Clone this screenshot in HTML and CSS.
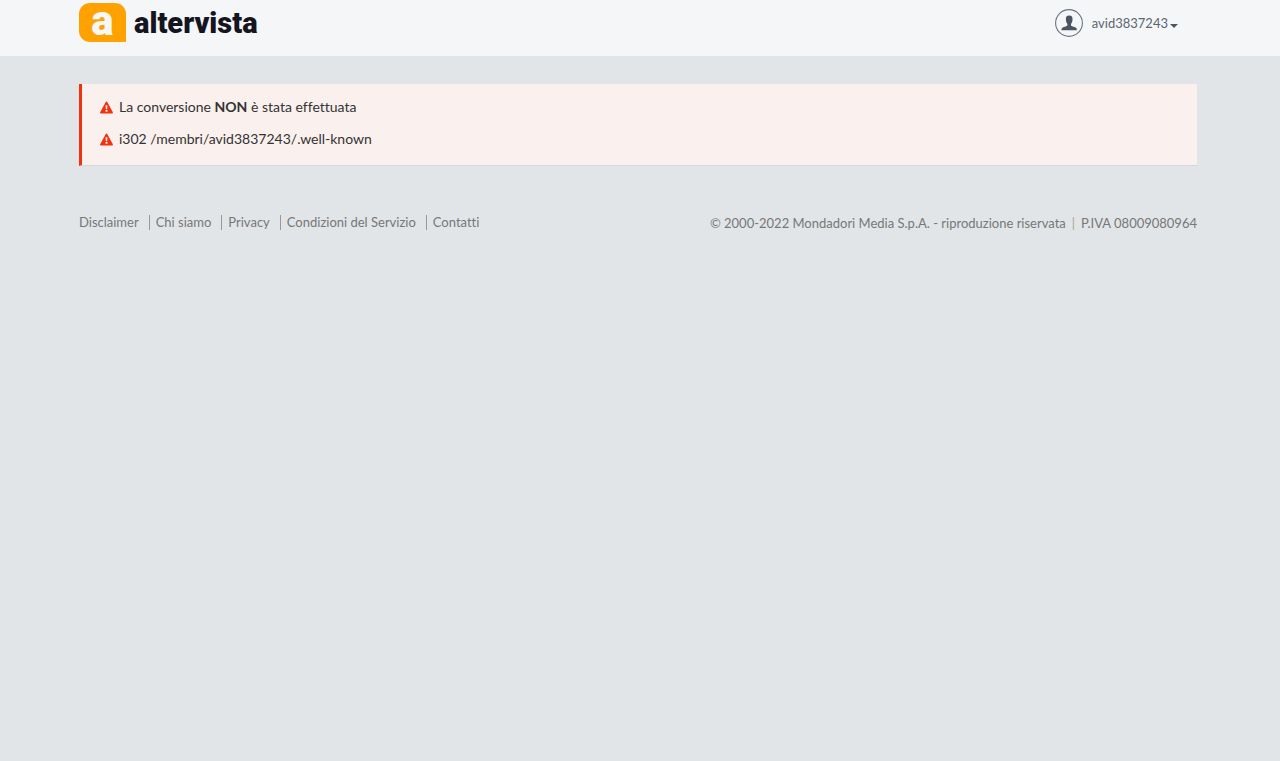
FILE: index.html
```html
<!DOCTYPE html>
<html lang="it">
<head>
<meta charset="utf-8">
<meta name="viewport" content="width=device-width, initial-scale=1">
<title>Altervista</title>
<link rel="stylesheet" href="styles.css">
</head>
<body>
<header class="topbar">
  <div class="container topbar-inner">
    <a class="brand" href="#">
      <span class="brand-mark" aria-hidden="true">a</span>
      <span class="brand-name">altervista</span>
    </a>
    <button class="user" type="button">
      <svg class="avatar" viewBox="0 0 28 28" aria-hidden="true">
        <circle cx="14" cy="14" r="13.4" fill="none" stroke="#6b7480" stroke-width="1.1"/>
        <path fill="#4b5661" d="M14.200 6.500C11.600 6.500 10.700 8 10.900 10.300C10.900 12.600 11.500 14 12.400 15C12.600 16.500 12.200 17 10.700 17.500C8 18.300 6.500 18.500 6.500 21.200H21.900C21.900 18.500 20.400 18.300 17.700 17.500C16.200 17 15.800 16.500 16 15C16.900 14 17.500 12.600 17.500 10.300C17.700 8 16.800 6.500 14.200 6.500Z"/>
      </svg>
      <span>avid3837243</span>
      <svg class="caret" viewBox="0 0 8 4" aria-hidden="true"><path fill="#4b5661" d="M0 0H8L4 4Z"/></svg>
    </button>
  </div>
</header>
<main class="container">
  <div class="alert" role="alert">
    <p class="alert-line">
      <svg class="warn" viewBox="0 0 14 13" aria-hidden="true"><path fill="#f0330f" d="M6.200.6Q7-.5 7.800.6L13.700 11.400Q14.200 12.800 13 13H1Q-.2 12.800.3 11.400Z"/><path fill="#faf0ee" d="M6 4.200H8L7.700 8.400H6.300ZM6 9.300H8V11.100H6Z"/></svg>
      <span>La conversione <strong>NON</strong> è stata effettuata</span>
    </p>
    <p class="alert-line">
      <svg class="warn" viewBox="0 0 14 13" aria-hidden="true"><path fill="#f0330f" d="M6.200.6Q7-.5 7.800.6L13.700 11.400Q14.200 12.800 13 13H1Q-.2 12.800.3 11.400Z"/><path fill="#faf0ee" d="M6 4.200H8L7.700 8.400H6.300ZM6 9.300H8V11.100H6Z"/></svg>
      <span>i302 /membri/avid3837243/.well-known</span>
    </p>
  </div>
</main>
<footer class="container footer">
  <nav class="links">
    <a href="#">Disclaimer</a>
    <a href="#">Chi siamo</a>
    <a href="#">Privacy</a>
    <a href="#">Condizioni del Servizio</a>
    <a href="#">Contatti</a>
  </nav>
  <p class="legal"><span>© 2000-2022 Mondadori Media S.p.A. - riproduzione riservata</span><span class="bar">|</span><span>P.IVA 08009080964</span></p>
</footer>
</body>
</html>
```
FILE: styles.css
```css
* { box-sizing: border-box; }
body {
  margin: 0;
  background: #e1e5e8;
  color: #333;
  font-family: Lato, "Liberation Sans", sans-serif;
  font-size: 14px;
  font-variant-ligatures: none;
  line-height: 20px;
}
.container {
  max-width: 1280px;
  margin: 0 auto;
  padding: 0 83px 0 79px;
}
.topbar { background: #f4f6f8; }
.topbar-inner {
  display: flex;
  justify-content: space-between;
  align-items: flex-start;
  padding-top: 3px;
  padding-bottom: 14px;
}
.brand {
  display: flex;
  align-items: center;
  gap: 8px;
  color: #15151f;
  font-family: Roboto, sans-serif;
  font-weight: 900;
  text-decoration: none;
}
.brand-mark {
  width: 47px;
  height: 39px;
  border-radius: 11px 11px 0 11px;
  background: #ffa200;
  color: #f5f7f9;
  font-size: 42px;
  line-height: 36px;
  text-align: center;
}
.brand-name {
  font-size: 29px;
  line-height: 38px;
}
.user {
  display: flex;
  align-items: center;
  margin: 6px 19px 0 0;
  padding: 0;
  border: 0;
  background: none;
  color: #5b6670;
  font: 13px/28px Lato, sans-serif;
}
.avatar { width: 28px; height: 28px; margin-right: 9px; }
.caret { width: 8px; height: 4px; margin: 5px 0 0 2px; }
.alert {
  margin-top: 28px;
  padding: 13px 18px 16px;
  border-left: 3px solid #f0330f;
  border-bottom: 1px solid #d3d7da;
  background: #faf0ee;
}
.alert-line {
  display: flex;
  align-items: center;
  gap: 6px;
  margin: 0;
}
.alert-line + .alert-line { margin-top: 12px; }
.warn { width: 13px; height: 13px; }
.footer {
  display: flex;
  flex-wrap: wrap;
  justify-content: space-between;
  margin-top: 47px;
  color: #777;
  font-size: 13px;
}
.links { display: flex; flex-wrap: wrap; align-items: flex-start; padding-top: 2px; }
.links a { color: inherit; line-height: 15px; text-decoration: none; }
.links a + a {
  margin-left: 10px;
  padding-left: 6px;
  border-left: 1px solid #999;
}
.legal { display: flex; margin: 0; }
.bar { margin: 0 6px; color: #b3a08c; }
```
